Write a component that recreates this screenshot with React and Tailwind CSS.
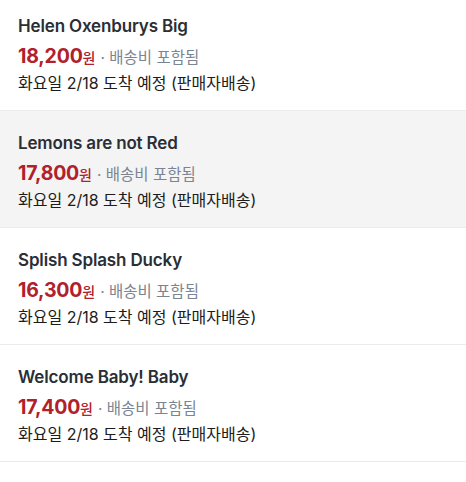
import React from "react";

const items = [
  { title: "Helen Oxenburys Big", price: "18,200", bg: "bg-white" },
  { title: "Lemons are not Red", price: "17,800", bg: "bg-[#f4f4f4]" },
  { title: "Splish Splash Ducky", price: "16,300", bg: "bg-white" },
  { title: "Welcome Baby! Baby", price: "17,400", bg: "bg-white" },
];

export default function App() {
  return (
    <div
      className="w-[466px] h-[482px] bg-white overflow-hidden"
      style={{ fontFamily: 'Inter, "Noto Sans CJK KR", sans-serif' }}
    >
      <div className="-mt-[6px]">
        {items.map((it, i) => (
          <div
            key={i}
            className={`${it.bg} h-[117px] border-b border-[#ececec] px-[18px] pt-[21px] flex flex-col`}
          >
            <div className="text-[17px] leading-[22px] font-semibold text-[#2a2e35] tracking-[-0.15px]">
              {it.title}
            </div>
            <div className="mt-[7px] flex items-baseline leading-[24px]">
              <span className="text-[19.5px] font-bold text-[#b0212b] tracking-[-0.2px]">{it.price}</span>
              <span className="text-[14px] font-medium text-[#b0212b]">원</span>
              <span className="ml-[5px] text-[15.5px] text-[#7b8592]">· 배송비 포함됨</span>
            </div>
            <div className="mt-[2px] text-[16px] leading-[22px] text-[#1c1c1c]">
              화요일 2/18 도착 예정 (판매자배송)
            </div>
          </div>
        ))}
      </div>
    </div>
  );
}
